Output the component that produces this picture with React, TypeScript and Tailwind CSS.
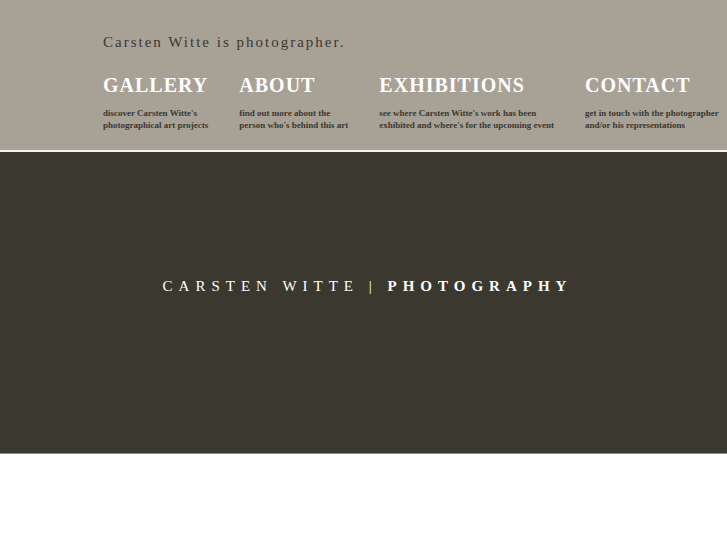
const sections = [
  { title: 'GALLERY', href: '#gallery', lines: ["discover Carsten Witte's", 'photographical art projects'] },
  { title: 'ABOUT', href: '#about', lines: ['find out more about the', "person who's behind this art"] },
  {
    title: 'EXHIBITIONS',
    href: '#exhibitions',
    lines: ["see where Carsten Witte's work has been", "exhibited and where's for the upcoming event"],
  },
  { title: 'CONTACT', href: '#contact', lines: ['get in touch with the photographer', 'and/or his representations'] },
];

export default function App() {
  return (
    <div className="overflow-hidden bg-white font-['Liberation_Serif',serif]">
      <header className="border-b-2 border-[#f4f2f0] bg-[#a8a196] pt-8 pb-[19px] pl-[103px]">
        <p className="text-[15px] leading-5 tracking-[2px] text-[#3b382f]">Carsten Witte is photographer.</p>
        <nav className="mt-[19px] flex gap-[31px]">
          {sections.map((s) => (
            <a key={s.title} href={s.href} className="block shrink-0 whitespace-nowrap">
              <span className="block text-xl leading-7 font-bold tracking-[1px] text-white">{s.title}</span>
              <span className="mt-2 block text-[9px] leading-3 font-bold text-[#3b382f]">
                {s.lines.map((line) => (
                  <span key={line} className="block">{line}</span>
                ))}
              </span>
            </a>
          ))}
        </nav>
      </header>

      <main className="border-b border-[#8f8d88] bg-[#3b382f] px-4 pt-[122px] pb-[155px] text-center">
        <h1 className="pl-2 text-[15px] leading-6 tracking-[6px] text-white">
          CARSTEN WITTE | <strong>PHOTOGRAPHY</strong>
        </h1>
      </main>
    </div>
  );
}
